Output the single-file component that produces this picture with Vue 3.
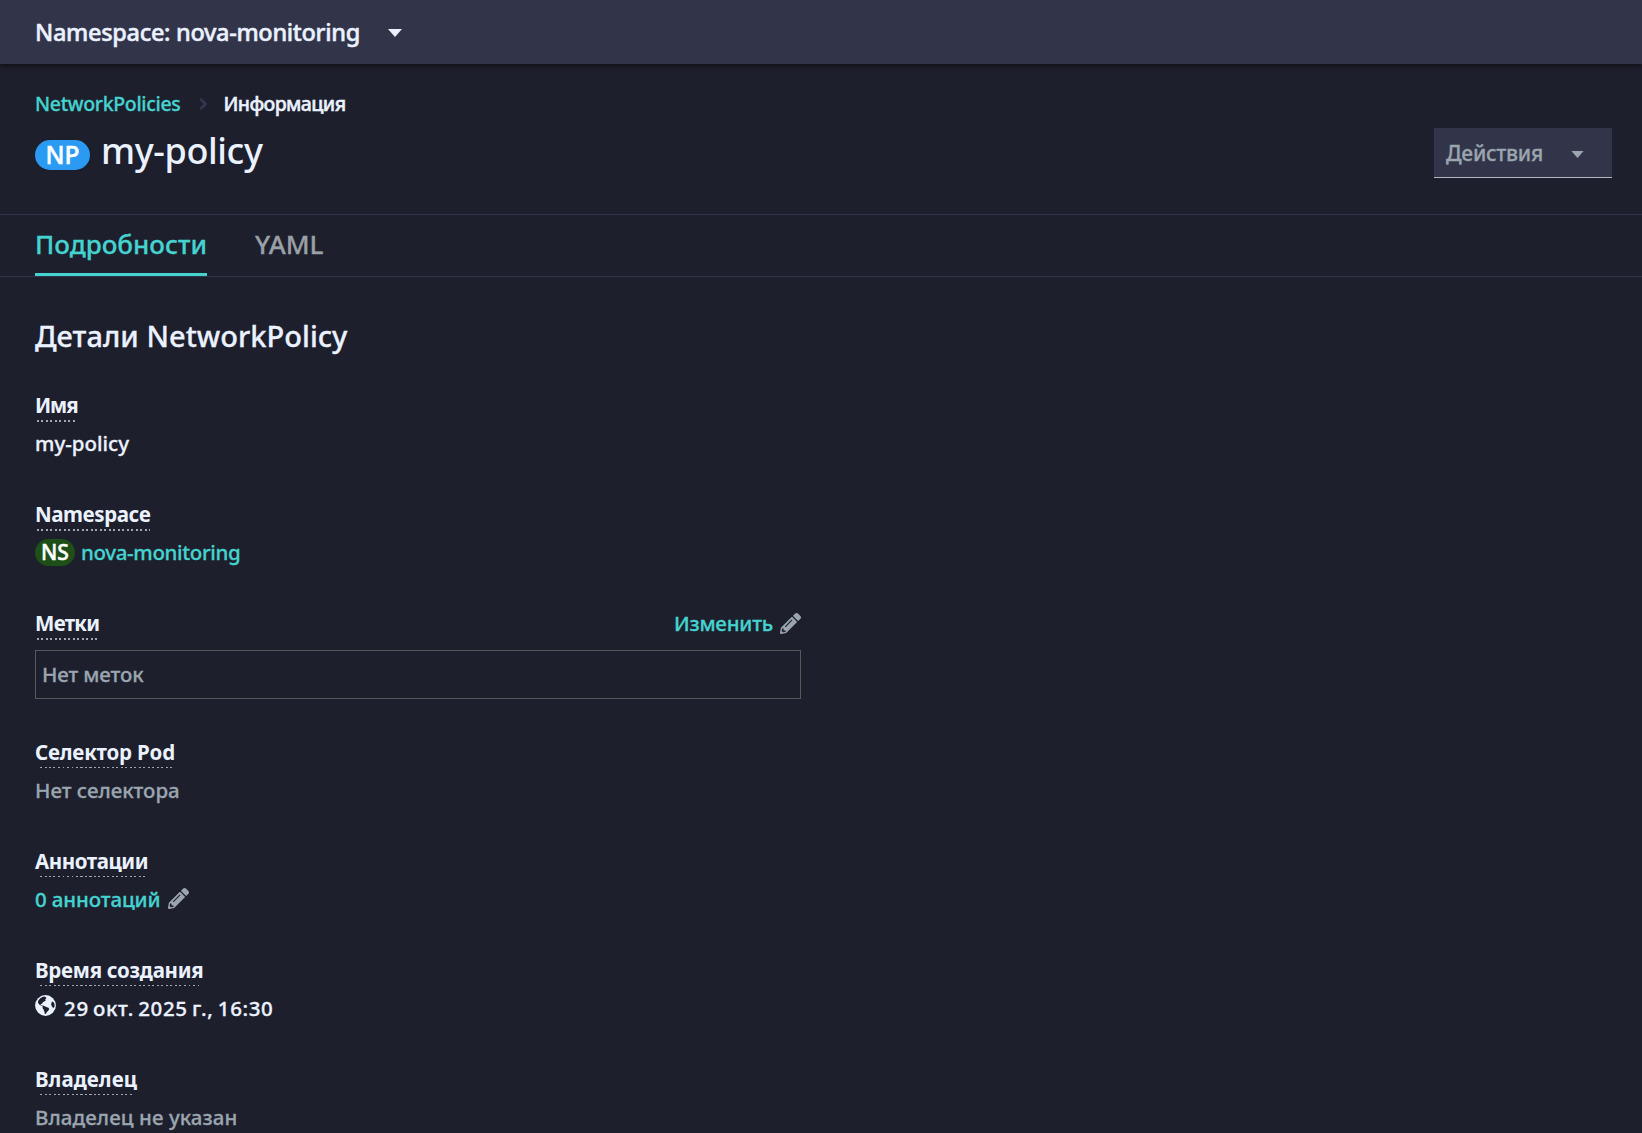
<script setup>
import { ref } from "vue";

const pencilPath =
  "M497.9 142.1l-46.1 46.1c-4.7 4.7-12.3 4.7-17 0l-111-111c-4.7-4.7-4.7-12.3 0-17l46.1-46.1c18.7-18.7 49.1-18.7 67.9 0l60.1 60.1c18.8 18.7 18.8 49.1 0 67.9zM284.2 99.8L21.6 362.4.4 483.9c-2.9 16.4 11.4 30.6 27.8 27.8l121.5-21.3 262.6-262.6c4.7-4.7 4.7-12.3 0-17l-111-111c-4.8-4.7-12.4-4.7-17.1 0zM124.1 339.9c-5.5-5.5-5.5-14.3 0-19.8l154-154c5.5-5.5 14.3-5.5 19.8 0s5.5 14.3 0 19.8l-154 154c-5.5 5.5-14.3 5.5-19.8 0zM88 424h48v36.3l-64.5 11.3-31.1-31.1L51.7 376H88v48z";

const activeTab = ref("details");
const tabs = [
  { id: "details", title: "Подробности" },
  { id: "yaml", title: "YAML" },
];
</script>

<template>
  <div class="page">
    <header class="namespace-bar">
      <button class="namespace-toggle">
        <span class="namespace-text">Namespace: nova-monitoring</span>
        <svg class="caret" viewBox="0 0 14 8"><path d="M0 0h14L7 8z" /></svg>
      </button>
    </header>

    <section class="heading">
      <nav class="breadcrumbs">
        <a href="#" class="crumb-link">NetworkPolicies</a>
        <svg class="chevron" viewBox="0 0 8 12"><path d="M1.2.8L6.6 6l-5.4 5.2" /></svg>
        <span class="crumb-current">Информация</span>
      </nav>
      <div class="title-row">
        <h1 class="title">
          <span class="badge badge-np">NP</span>
          <span class="title-text">my-policy</span>
        </h1>
        <button class="actions">
          <span>Действия</span>
          <svg class="caret-small" viewBox="0 0 14 8"><path d="M0 0h14L7 8z" /></svg>
        </button>
      </div>
    </section>

    <!-- Tabs -->
    <ul class="tabs">
      <li
        v-for="tab in tabs"
        :key="tab.id"
        class="tab"
        :class="{ active: activeTab === tab.id }"
        @click="activeTab = tab.id"
      >
        {{ tab.title }}
      </li>
    </ul>

    <main class="details">
      <h2>Детали NetworkPolicy</h2>

      <div class="field">
        <span class="label label-name">Имя</span>
        <div class="value">my-policy</div>
      </div>

      <div class="field">
        <span class="label label-ns">Namespace</span>
        <div class="value">
          <span class="badge badge-ns">NS</span>
          <a href="#" class="ns-link">nova-monitoring</a>
        </div>
      </div>

      <div class="field field-labels">
        <div class="label-row">
          <span class="label label-tags">Метки</span>
          <a href="#" class="edit">
            Изменить
            <svg class="pencil" viewBox="0 0 512 512"><path :d="pencilPath" /></svg>
          </a>
        </div>
        <div class="tags muted">Нет меток</div>
      </div>

      <div class="field">
        <span class="label thin label-pod">Селектор Pod</span>
        <div class="value muted">Нет селектора</div>
      </div>

      <div class="field">
        <span class="label thin label-notes">Аннотации</span>
        <div class="value">
          <a href="#" class="notes-link">0 аннотаций</a>
          <svg class="pencil pencil-notes" viewBox="0 0 512 512"><path :d="pencilPath" /></svg>
        </div>
      </div>

      <div class="field">
        <span class="label thin label-created">Время создания</span>
        <div class="value">
          <svg class="globe" viewBox="0 0 21 21">
            <circle cx="10.5" cy="10.5" r="10.4" />
            <path
              class="land"
              d="M9.4 1.6L11 2.2l.4 1.4-1.3.5.8 1.2-1.6 1.2-1.5.7-.6 1.6-1.8.3 1.2 1.5 2.3.2 2.3 1.1 2.3.9.7 1.3-1.1 1.8-1.3 1.1-.8 1.8-1.1.2-.6-2.8-.8-1.8-1-1.5.3-1.5-1.9-.8-1.7-1.1-1.3-1.9.3-1.9 1.8-2.2 2.4-1.6zM17 6.4l1.7.8.9 2.4-.2 2.5-1.2.8-1.3-1.4-.8-2.2z"
            />
          </svg>
          <span class="date">29 окт. 2025 г., 16:30</span>
        </div>
      </div>

      <div class="field">
        <span class="label thin label-owner">Владелец</span>
        <div class="value muted owner">Владелец не указан</div>
      </div>
    </main>
  </div>
</template>

<style>
body {
  background: #1e1f2d;
  overflow: hidden;
}
</style>

<style scoped>
.page {
  height: 1133px;
  overflow: hidden;
  background: #1e1f2d;
  color: #ebf2ff;
  font-family: "Noto Sans", "Open Sans", sans-serif;
  font-size: 20.5px;
  font-weight: 500;
  line-height: 30px;
  -webkit-text-stroke: 0.3px currentColor;
}

a {
  color: #45d3d0;
  text-decoration: none;
}

button {
  font: inherit;
  color: inherit;
  border: 0;
  cursor: pointer;
}

/* === Namespace bar === */
.namespace-bar {
  position: relative;
  height: 64px;
  padding-left: 35px;
  display: flex;
  align-items: center;
  background: #32344a;
  box-shadow: 0 2px 5px rgba(0, 0, 0, 0.55);
}

.namespace-toggle {
  display: flex;
  align-items: center;
  gap: 28px;
  padding: 0;
  background: none;
  font-size: 23.5px;
  -webkit-text-stroke: 0.5px currentColor;
}

.namespace-text {
  letter-spacing: -0.31px;
}

.caret {
  width: 14px;
  height: 8px;
  margin-top: 2px;
  fill: #ebf2ff;
}

/* === Heading === */
.heading {
  height: 150px;
  box-sizing: border-box;
  padding: 24px 30px 0 35px;
}

.breadcrumbs {
  display: flex;
  align-items: center;
  height: 32px;
  font-size: 19.5px;
}

.crumb-link {
  letter-spacing: -0.33px;
}

.chevron {
  width: 8px;
  height: 12px;
  margin: 0 17px 0 18px;
  fill: none;
  stroke: #34364d;
  stroke-width: 2.6;
}

.crumb-current {
  letter-spacing: -0.62px;
  -webkit-text-stroke: 0.5px currentColor;
}

.title-row {
  display: flex;
  justify-content: space-between;
  align-items: flex-start;
  padding-top: 8px;
}

.title {
  display: flex;
  align-items: center;
  gap: 11px;
  height: 44px;
  margin: 0;
  font-size: 36px;
  font-weight: 500;
}

.title-text {
  margin-top: 2px;
  letter-spacing: -0.4px;
  -webkit-text-stroke: 0;
}

.badge {
  display: inline-flex;
  align-items: center;
  justify-content: center;
  color: #ffffff;
  -webkit-text-stroke: 0.5px currentColor;
}

.badge-np {
  width: 55px;
  height: 30px;
  margin-top: 10px;
  border-radius: 15px;
  background: #2b9af3;
  font-size: 24.5px;
}

.badge-ns {
  width: 40px;
  height: 27px;
  margin-right: 6px;
  border-radius: 14px;
  background: #1e4f18;
  font-size: 21px;
}

.actions {
  display: flex;
  align-items: center;
  width: 178px;
  height: 50px;
  padding: 0 0 0 12px;
  box-sizing: border-box;
  background: #32344a;
  border-bottom: 1px solid #b4b7c2;
  color: #9aa5ae;
  font-size: 21px;
  letter-spacing: -0.25px;
}

.caret-small {
  width: 13px;
  height: 7px;
  margin: 3px 0 0 28px;
  fill: #9aa5ae;
}

/* === Tabs === */
.tabs {
  display: flex;
  gap: 48px;
  height: 63px;
  box-sizing: border-box;
  margin: 0;
  padding: 0 35px;
  list-style: none;
  border-top: 1px solid #32344a;
  border-bottom: 1px solid #32344a;
}

.tab {
  height: 61px;
  box-sizing: border-box;
  padding-top: 14px;
  border-bottom: 3px solid transparent;
  color: #9aa0a6;
  font-size: 26px;
  cursor: pointer;
}

.tab.active {
  color: #45d3d0;
  border-bottom-color: #45d3d0;
}

/* === Details === */
.details {
  width: 766px;
  padding: 41px 0 0 35px;
}

h2 {
  margin: 0 0 36px;
  font-size: 29px;
  font-weight: 500;
  line-height: 36px;
  letter-spacing: 0.04px;
}

.field {
  margin-bottom: 41px;
}

.field-labels {
  margin-bottom: 38px;
}

.label {
  display: block;
  width: fit-content;
  height: 32px;
  font-weight: 700;
  background: repeating-linear-gradient(90deg, transparent 0 2px, #a2a5b2 2px 4px, transparent 4px 4.5px) left bottom / 100% 2px no-repeat;
  -webkit-text-stroke: 0;
}

.label.thin {
  background-size: calc(100% - 6px) 1px;
  background-position: 3px 30px;
}

.label-name {
  letter-spacing: -1.1px;
}

.label-ns,
.label-notes {
  letter-spacing: -0.45px;
}

.label-tags {
  letter-spacing: -0.7px;
}

.label-pod {
  letter-spacing: -0.2px;
}

.label-created {
  letter-spacing: -0.27px;
}

.label-owner {
  letter-spacing: 0.05px;
}

.value {
  display: flex;
  align-items: center;
  height: 30px;
  margin-top: 6px;
}

.muted {
  color: #9aa5ae;
}

.owner {
  letter-spacing: 0.08px;
}

.ns-link {
  letter-spacing: -0.35px;
}

.notes-link {
  letter-spacing: -0.12px;
}

.date {
  letter-spacing: 0.65px;
  word-spacing: -1.7px;
}

.label-row {
  display: flex;
  justify-content: space-between;
  align-items: flex-start;
}

.edit {
  display: flex;
  align-items: center;
  letter-spacing: -0.2px;
}

.pencil {
  width: 21px;
  height: 21px;
  margin-left: 7px;
  fill: #9aa5ae;
}

.pencil-notes {
  margin-top: -2px;
}

.tags {
  height: 49px;
  box-sizing: border-box;
  margin-top: 10px;
  padding: 8px 6px;
  border: 1px solid #57585a;
  letter-spacing: -0.12px;
}

.globe {
  width: 21px;
  height: 21px;
  margin: -5px 8px 0 0;
  fill: #ebf2ff;
}

.globe .land {
  fill: #1e1f2d;
}
</style>
